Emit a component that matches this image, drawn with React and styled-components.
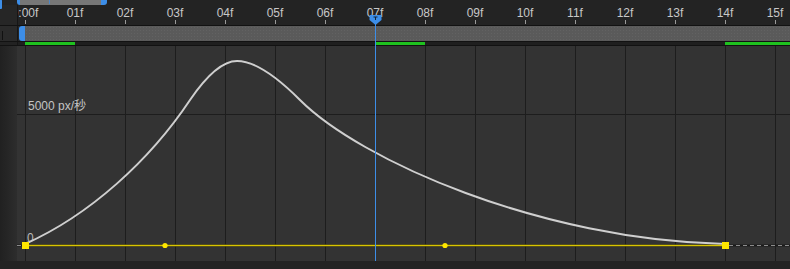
import React from "react";
import styled, { createGlobalStyle } from "styled-components";

const FRAME = 50;
const ORIGIN = 25;
const frames = Array.from({ length: 16 }, (_, i) => i);
const frameLabel = (i) => (i === 0 ? "0:00f" : `${String(i).padStart(2, "0")}f`);

const Global = createGlobalStyle`
  html, body { margin: 0; padding: 0; background: #232323; }
  body { font-family: "Liberation Sans", "Noto Sans CJK JP", sans-serif; }
`;

const Panel = styled.div`
  position: relative;
  width: 790px;
  height: 269px;
  overflow: hidden;
  display: flex;
  flex-direction: column;
  background: #232323;
  color: #c4c4c4;
  font-size: 12px;
`;

const Row = styled.div`
  display: flex;
  height: ${(p) => p.$h}px;
  flex: none;
  border-bottom: ${(p) => (p.$line ? "1px solid #121212" : "none")};
`;

const Gutter = styled.div`
  position: relative;
  width: 17px;
  flex: none;
  background: ${(p) => p.$bg || "#262626"};
  border-right: ${(p) => (p.$edge ? "1px solid #161616" : "none")};
`;

const Track = styled.div`
  position: relative;
  flex: 1;
  display: flex;
  overflow: hidden;
  background: ${(p) => p.$bg || "#232323"};
`;

const EdgeThumb = styled.div`
  width: 2px;
  height: ${(p) => p.$h || 14}px;
  margin-top: ${(p) => p.$top || 0}px;
  background: #3d8ee8;
  border-radius: 0 1px 1px 0;
`;

const NavHandle = styled.div`
  width: ${(p) => p.$w}px;
  height: 5px;
  flex: none;
  background: #3d8ee8;
  border-radius: ${(p) => (p.$right ? "0 0 3px 0" : "0 0 0 3px")};
`;

const NavBar = styled.div`
  width: 81px;
  height: 5px;
  flex: none;
  background: #777;
  position: relative;
  &::after {
    content: "";
    position: absolute;
    left: 29px;
    top: 0;
    width: 1px;
    height: 4px;
    background: #3d8ee8;
    opacity: 0.7;
  }
`;

const Ruler = styled.div`
  display: flex;
  margin-left: -18px;
`;

const Cell = styled.div`
  width: ${FRAME}px;
  flex: none;
  display: flex;
  flex-direction: column;
  align-items: center;
`;

const CellLabel = styled.span`
  margin-top: 2px;
  height: 13px;
  line-height: 13px;
  color: #c8c8c8;
  white-space: nowrap;
`;

const Tick = styled.span`
  width: 1px;
  height: 4px;
  margin-left: 1px;
  background: #9a9a9a;
`;

const Notch = styled.div`
  position: absolute;
  left: 2px;
  top: 5px;
  width: 1px;
  height: 9px;
  background: #111;
`;

const WorkHandle = styled.div`
  width: 6px;
  margin-left: 1px;
  flex: none;
  background: #3d8ee8;
  border-radius: 3px 0 0 3px;
`;

const WorkBar = styled.div`
  flex: 1;
  background-color: #5a5a5a;
  background-image: radial-gradient(rgba(255, 255, 255, 0.05) 1px, transparent 1px);
  background-size: 3px 3px;
`;

const Spans = styled.div`
  position: relative;
  flex: 1;
`;

const Span = styled.div`
  position: absolute;
  top: 0;
  bottom: 0;
  background: #1fc21f;
`;

const GraphGutter = styled(Gutter)`
  background: linear-gradient(to right, #212121 0%, #262626 45%, #2d2d2d 100%);
`;

const Graph = styled.svg`
  display: block;
  flex: none;
  font-family: "Liberation Sans", "Noto Sans CJK JP", sans-serif;
  font-size: 12px;
`;

const Playhead = styled.div`
  position: absolute;
  left: 368px;
  top: 14px;
  width: 15px;
  height: 247px;
  pointer-events: none;
`;

const curve =
  "M25,244 C90,215 150,160 190,100 C205,78 222,61 237,61 C252,61 272,72 300,100 " +
  "C360,160 540,240 725,244";

export default function App() {
  return (
    <>
      <Global />
      <Panel>
        <Row $h={5}>
          <Gutter $bg="#232323">
            <EdgeThumb />
          </Gutter>
          <Track>
            <NavHandle $w={3} />
            <NavBar />
            <NavHandle $w={6} $right />
          </Track>
        </Row>

        <Row $h={20} $line>
          <Gutter $edge>
            <EdgeThumb $h={9} $top={-5} />
          </Gutter>
          <Track>
            <Ruler>
              {frames.map((i) => (
                <Cell key={i}>
                  <CellLabel>{frameLabel(i)}</CellLabel>
                  <Tick />
                </Cell>
              ))}
            </Ruler>
          </Track>
        </Row>

        <Row $h={15} $line>
          <Gutter $bg="#2a2a2a" $edge>
            <Notch />
          </Gutter>
          <Track $bg="#262626">
            <WorkHandle />
            <WorkBar />
          </Track>
        </Row>

        <Row $h={3} $line>
          <Gutter $bg="#222" $edge />
          <Track $bg="#1f1f1f">
            <Spans>
              <Span style={{ left: ORIGIN - 18, width: FRAME }} />
              <Span style={{ left: ORIGIN + 7 * FRAME - 18, width: FRAME }} />
              <Span style={{ left: ORIGIN + 14 * FRAME - 18, width: 100 }} />
            </Spans>
          </Track>
        </Row>

        <Row $h={215}>
          <GraphGutter />
          <Graph width={773} height={215} viewBox="17 46 773 215">
            <rect x="17" y="46" width="773" height="215" fill="#333" />
            {frames.map((i) => (
              <line
                key={i}
                x1={ORIGIN + i * FRAME + 0.5}
                x2={ORIGIN + i * FRAME + 0.5}
                y1="46"
                y2="261"
                stroke="#1d1d1d"
                strokeWidth="1"
              />
            ))}
            <line x1="17" x2="790" y1="114.5" y2="114.5" stroke="#1d1d1d" />
            <line x1="17" x2="790" y1="245.5" y2="245.5" stroke="#1a1a1a" strokeWidth="2" />
            <text x="28" y="110" fill="#c4c4c4">
              5000 px/秒
            </text>
            <text x="27" y="242" fill="#b8b8b8">
              0
            </text>
            <line x1="17" x2="21" y1="245.5" y2="245.5" stroke="#8a8a8a" />
            <line
              x1="729"
              x2="790"
              y1="245.5"
              y2="245.5"
              stroke="#8c8c8c"
              strokeDasharray="4 3"
            />
            <path d={curve} fill="none" stroke="#cfcfcf" strokeWidth="2" strokeLinecap="round" />
            <line x1="25" x2="725" y1="245.5" y2="245.5" stroke="#d8c400" strokeWidth="1.4" />
            <circle cx="165" cy="245.5" r="2.6" fill="#ffe600" />
            <circle cx="445" cy="245.5" r="2.6" fill="#ffe600" />
            <rect x="22" y="242" width="7" height="7" fill="#ffe600" />
            <rect x="722" y="242" width="7" height="7" fill="#ffe600" />
          </Graph>
        </Row>

        <Playhead>
          <svg width="15" height="247" viewBox="0 0 15 247">
            <path d="M1.5,1 H13.5 V6 L7.5,11 L1.5,6 Z" fill="#3d8ee8" />
            <path d="M5.5,3 H9.5 M7.5,3 V6" stroke="#10243a" strokeWidth="1" />
            <line x1="7.5" x2="7.5" y1="10" y2="247" stroke="#3d8ee8" strokeWidth="1" />
          </svg>
        </Playhead>
      </Panel>
    </>
  );
}
